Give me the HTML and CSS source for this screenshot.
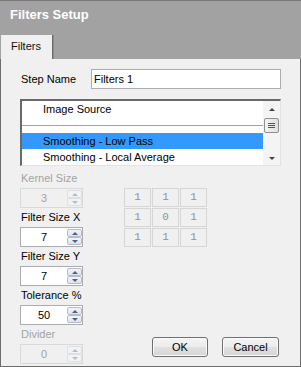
FILE: index.html
```html
<!DOCTYPE html>
<html lang="en">
<head>
    <meta charset="UTF-8">
    <title>Filters Setup</title>
    <link rel="stylesheet" href="styles.css">
</head>
<body>

<div class="window">
    <div class="header">
        <div class="title">Filters Setup</div>
        <div class="tab">Filters</div>
    </div>

    <div class="panel">
        <div class="step-row">
            <span class="step-label">Step Name</span>
            <div class="textbox">Filters 1</div>
        </div>

        <div class="listbox">
            <div class="list-items">
                <div class="item">Image Source</div>
                <div class="item sep-row"><div class="sep"></div></div>
                <div class="item selected">Smoothing - Low Pass</div>
                <div class="item">Smoothing - Local Average</div>
            </div>
            <div class="scrollbar">
                <div class="arrow-up"></div>
                <div class="thumb">
                    <span></span><span></span><span></span>
                </div>
                <div class="arrow-down"></div>
            </div>
        </div>

        <div class="lower">
            <div class="fields">
                <div class="field-label disabled">Kernel Size</div>
                <div class="spinner disabled">
                    <span class="value">3</span>
                    <div class="spin-btns"><div class="up"></div><div class="down"></div></div>
                </div>

                <div class="field-label">Filter Size X</div>
                <div class="spinner">
                    <span class="value">7</span>
                    <div class="spin-btns"><div class="up"></div><div class="down"></div></div>
                </div>

                <div class="field-label">Filter Size Y</div>
                <div class="spinner">
                    <span class="value">7</span>
                    <div class="spin-btns"><div class="up"></div><div class="down"></div></div>
                </div>

                <div class="field-label">Tolerance %</div>
                <div class="spinner">
                    <span class="value">50</span>
                    <div class="spin-btns"><div class="up"></div><div class="down"></div></div>
                </div>

                <div class="field-label disabled">Divider</div>
                <div class="spinner disabled">
                    <span class="value">0</span>
                    <div class="spin-btns"><div class="up"></div><div class="down"></div></div>
                </div>
            </div>

            <div class="side">
                <div class="kernel">
                    <div class="cell">1</div><div class="cell">1</div><div class="cell">1</div>
                    <div class="cell">1</div><div class="cell">0</div><div class="cell">1</div>
                    <div class="cell">1</div><div class="cell">1</div><div class="cell">1</div>
                </div>

                <div class="buttons">
                    <div class="btn ok">OK</div>
                    <div class="btn cancel">Cancel</div>
                </div>
            </div>
        </div>
    </div>
</div>

</body>
</html>
```

FILE: styles.css
```css
body{
    margin: 0;
    font-family: "Liberation Sans", Arial, sans-serif;
    font-size: 11px;
    color: #000;
}
.window{
    width: 301px;
    height: 367px;
    display: flex;
    flex-direction: column;
}

/* title bar + tab strip */
.header{
    height: 58px;
    border-top: 1px solid #777;
    background: #a2a2a2;
    display: flex;
    flex-direction: column;
}
.title{
    margin-top: 6px;
    padding-left: 10px;
    line-height: 16px;
    font-size: 13px;
    font-weight: bold;
    color: #fff;
}
.tab{
    margin-top: 12px;
    margin-left: 1px;
    width: 41px;
    height: 24px;
    line-height: 23px;
    padding-left: 10px;
    background: #f0f0f0;
    border-right: 1px solid #6a6a6a;
    box-shadow: 1px 0 0 #8c8c8c;
    color: #111;
}

.panel{
    flex: 1;
    background: #f0f0f0;
    border-left: 1px solid #6d6d6d;
    border-right: 1px solid #6d6d6d;
    border-bottom: 1px solid #6d6d6d;
    padding: 10px 19px 0 19px;
}

.step-row{
    display: flex;
    height: 20px;
    align-items: center;
}
.step-label{
    width: 70px;
    padding-left: 1px;
}
.textbox{
    flex: 1;
    height: 18px;
    line-height: 18px;
    border: 1px solid #abadb3;
    background: #fff;
    padding-left: 2px;
}

/* list box */
.listbox{
    margin-top: 10px;
    height: 64px;
    display: flex;
    background: #fff;
    border-top: 2px solid #696969;
    border-left: 2px solid #696969;
    border-right: 1px solid #e3e3e3;
    border-bottom: 1px solid #e3e3e3;
}
.list-items{
    flex: 1;
}
.item{
    height: 16px;
    line-height: 16px;
    padding-left: 21px;
}
.item.selected{
    background: #3399ff;
}
.sep-row{
    padding: 8px 0 0 0;
    box-sizing: border-box;
}
.sep{
    height: 1px;
    background: #a0a0a0;
}
.scrollbar{
    width: 17px;
    background: #f4f4f4;
    display: flex;
    flex-direction: column;
    align-items: center;
}
.arrow-up{
    margin-top: 7px;
    width: 0;
    height: 0;
    border-style: solid;
    border-width: 0 3px 3px 3px;
    border-color: transparent transparent #444 transparent;
}
.arrow-down{
    margin-top: 24px;
    width: 0;
    height: 0;
    border-style: solid;
    border-width: 3px 3px 0 3px;
    border-color: #444 transparent transparent transparent;
}
.thumb{
    margin-top: 7px;
    width: 13px;
    height: 13px;
    border: 1px solid #8f8f8f;
    border-radius: 2px;
    background: linear-gradient(to right, #f3f3f3, #e0e0e0);
    display: flex;
    flex-direction: column;
    align-items: center;
    justify-content: center;
    gap: 1px;
}
.thumb span{
    width: 7px;
    height: 1px;
    background: #555;
}

/* lower section */
.lower{
    margin-top: 3px;
    display: flex;
}
.fields{
    width: 63px;
}
.field-label{
    height: 19px;
    line-height: 19px;
    padding-left: 1px;
    white-space: nowrap;
}
.field-label.disabled{
    color: #a3a3a3;
}
.spinner{
    height: 18px;
    border: 1px solid #abadb3;
    background: #fff;
    display: flex;
}
.spinner .value{
    flex: 1;
    text-align: center;
    line-height: 18px;
}
.spinner.disabled{
    border-color: #d9d9d9;
    background: #f0f0f0;
}
.spinner.disabled .value{
    color: #a3a3a3;
}
.spin-btns{
    width: 15px;
    padding: 1px 0;
    display: flex;
    flex-direction: column;
}
.spin-btns div{
    flex: 1;
    border: 1px solid #b6bccc;
    border-radius: 2px;
    background: linear-gradient(#f2f4f8, #dde2ec);
    display: flex;
    align-items: center;
    justify-content: center;
}
.spin-btns .up::after,
.spin-btns .down::after{
    content: "";
    width: 0;
    height: 0;
    border-style: solid;
}
.spin-btns .up::after{
    border-width: 0 3px 3px 3px;
    border-color: transparent transparent #4d6185 transparent;
}
.spin-btns .down::after{
    border-width: 3px 3px 0 3px;
    border-color: #4d6185 transparent transparent transparent;
}
.spinner.disabled .spin-btns div{
    border-color: #dcdfe6;
    background: #f2f3f5;
}
.spinner.disabled .spin-btns .up::after{
    border-bottom-color: #b4bccb;
}
.spinner.disabled .spin-btns .down::after{
    border-top-color: #b4bccb;
}

.side{
    flex: 1;
    margin-left: 41px;
    display: flex;
    flex-direction: column;
}
.kernel{
    margin-top: 19px;
    display: grid;
    grid-template-columns: repeat(3, 27px);
    grid-template-rows: repeat(3, 19px);
    gap: 1px;
    align-self: flex-start;
}
.cell{
    border: 1px solid #d6d6d6;
    text-align: center;
    line-height: 17px;
    font-family: "Liberation Mono", monospace;
    font-size: 11px;
    color: #8f8fa8;
}

.buttons{
    margin-top: auto;
    margin-right: 2px;
    margin-bottom: 7px;
    align-self: flex-end;
    display: flex;
    gap: 14px;
}
.btn{
    height: 18px;
    line-height: 18px;
    text-align: center;
    border: 1px solid #707070;
    border-radius: 3px;
    box-shadow: inset 0 0 0 1px #fbfbfb;
    background: linear-gradient(#f4f4f4 0%, #ececec 50%, #e0e0e0 51%, #d6d6d6 100%);
}
.btn.ok{
    width: 54px;
}
.btn.cancel{
    width: 55px;
}
```
